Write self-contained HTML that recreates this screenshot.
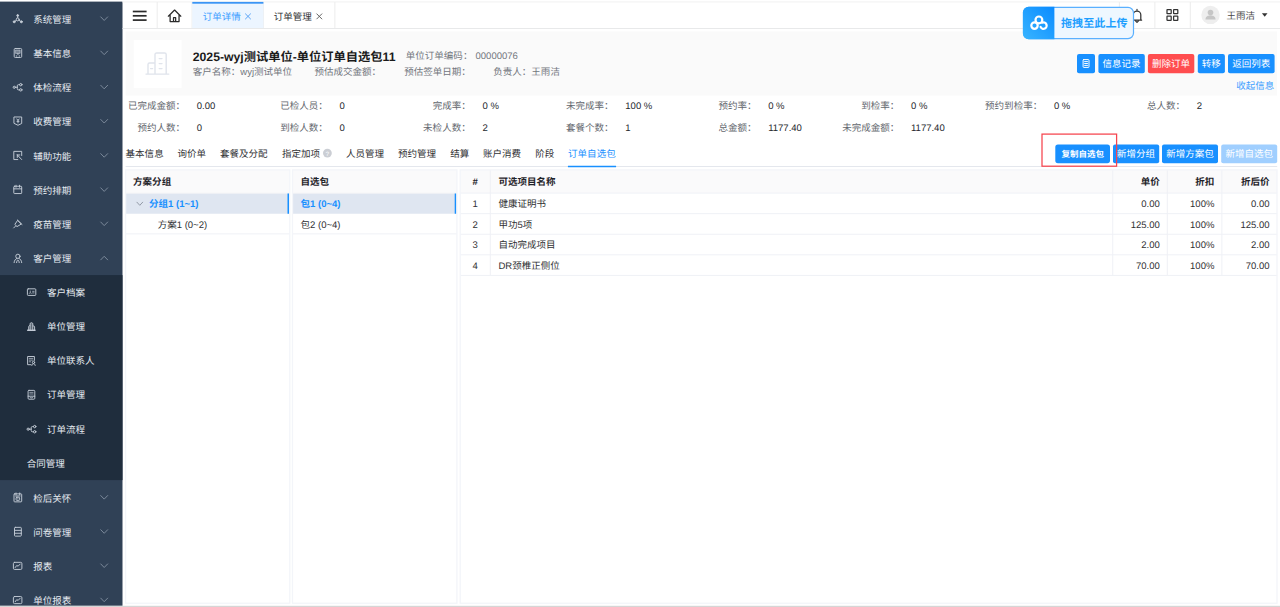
<!DOCTYPE html>
<html>
<head>
<meta charset="utf-8">
<title>订单详情</title>
<style>
*{box-sizing:border-box;margin:0;padding:0}
html,body{width:1280px;height:607px;overflow:hidden;background:#fff}
body{text-rendering:geometricPrecision;font-family:"Liberation Sans","Noto Sans CJK SC",sans-serif;font-size:9.53px;color:#303133;position:relative}
#bg{position:absolute;left:0;top:0;width:1280px;height:607px}
.t{position:absolute;white-space:nowrap;line-height:20px;height:20px}
.r{transform:translateX(-100%)}
.c{transform:translateX(-50%)}
.b{font-weight:bold}
.m{color:#e6ebf1}
.g{color:#72767d}
.lab{color:#63676e}
.val{color:#25282d}
.w{color:#fff}
</style>
</head>
<body>
<svg id="bg" width="1280" height="607" viewBox="0 0 1280 607" fill="none">
<rect x="0.00" y="1.60" width="122.50" height="604.20" fill="#304156"/>
<rect x="0.00" y="275.10" width="122.50" height="205.00" fill="#1f2d3d"/>
<g transform="translate(12.70 13.80) scale(1.000)" fill="none" stroke="#c3cbd6" stroke-width="0.95" stroke-linecap="round" stroke-linejoin="round"><circle cx="5" cy="1.700" r=".9" fill="#cfd6df"/><circle cx="5" cy="5.600" r="1.500"/><circle cx="1.500" cy="8" r="1" fill="#cfd6df"/><circle cx="8.600" cy="8" r="1" fill="#cfd6df"/><path d="M5 2.700V4.100M3.700 6.400L2.400 7.300M6.300 6.400l1.300.9"/></g>
<path d="M100.75 16.90l3.45 3.55 3.45-3.55" fill="none" stroke="#8391a2" stroke-width="0.9" stroke-linecap="round" stroke-linejoin="round"/>
<g transform="translate(12.70 47.99) scale(1.000)" fill="none" stroke="#c3cbd6" stroke-width="0.95" stroke-linecap="round" stroke-linejoin="round"><rect x="1.500" y=".5" width="7.500" height="9" rx="1.100"/><rect x="3.100" y="2.100" width="4.300" height="3.300" fill="#cfd6df" fill-opacity=".45" stroke-opacity=".7"/><path d="M5.250 5.500v1.100M3.500 8h.6M6.400 8h.6"/></g>
<path d="M100.75 51.09l3.45 3.55 3.45-3.55" fill="none" stroke="#8391a2" stroke-width="0.9" stroke-linecap="round" stroke-linejoin="round"/>
<g transform="translate(12.70 82.18) scale(1.000)" fill="none" stroke="#c3cbd6" stroke-width="0.95" stroke-linecap="round" stroke-linejoin="round"><circle cx="1.550" cy="5.100" r="1.100"/><circle cx="8.100" cy="2.500" r="1.200"/><circle cx="8.100" cy="7.700" r="1.200"/><path d="M2.700 5.100h1.900M6.800 2.500H5.700c-.7 0-1.100.4-1.100 1.100v3c0 .7.400 1.100 1.100 1.100h1.100"/></g>
<path d="M100.75 85.28l3.45 3.55 3.45-3.55" fill="none" stroke="#8391a2" stroke-width="0.9" stroke-linecap="round" stroke-linejoin="round"/>
<g transform="translate(12.70 116.37) scale(1.000)" fill="none" stroke="#c3cbd6" stroke-width="0.95" stroke-linecap="round" stroke-linejoin="round"><path d="M1.600.6h7.400v6.500L5.300 8.900 1.600 7.100z"/><path d="M4.200 2.600l1.100 1.600 1.100-1.600M5.300 4.200v2.300M4.300 5h2"/></g>
<path d="M100.75 119.47l3.45 3.55 3.45-3.55" fill="none" stroke="#8391a2" stroke-width="0.9" stroke-linecap="round" stroke-linejoin="round"/>
<g transform="translate(12.70 150.56) scale(1.000)" fill="none" stroke="#c3cbd6" stroke-width="0.95" stroke-linecap="round" stroke-linejoin="round"><path d="M9 5V.8H1.100v8.200h4"/><path d="M4.600 4.400l4.400 4.600M4.600 4.400h2.500M4.600 4.400v2.500"/></g>
<path d="M100.75 153.66l3.45 3.55 3.45-3.55" fill="none" stroke="#8391a2" stroke-width="0.9" stroke-linecap="round" stroke-linejoin="round"/>
<g transform="translate(12.70 184.75) scale(1.000)" fill="none" stroke="#c3cbd6" stroke-width="0.95" stroke-linecap="round" stroke-linejoin="round"><rect x="1.100" y="1.500" width="7.900" height="7.300" rx=".7"/><path d="M1.100 4.100h7.900M3.300.5v2M6.800.5v2"/></g>
<path d="M100.75 187.85l3.45 3.55 3.45-3.55" fill="none" stroke="#8391a2" stroke-width="0.9" stroke-linecap="round" stroke-linejoin="round"/>
<g transform="translate(12.70 218.94) scale(1.000)" fill="none" stroke="#c3cbd6" stroke-width="0.95" stroke-linecap="round" stroke-linejoin="round"><path d="M1 9l2-2M2.400 5.800l1.900 1.900 4.300-2.600L5.200 1.700zM4.700 1.100l4.600 4.400"/></g>
<path d="M100.75 222.04l3.45 3.55 3.45-3.55" fill="none" stroke="#8391a2" stroke-width="0.9" stroke-linecap="round" stroke-linejoin="round"/>
<g transform="translate(12.70 253.13) scale(1.000)" fill="none" stroke="#c3cbd6" stroke-width="0.95" stroke-linecap="round" stroke-linejoin="round"><circle cx="5.200" cy="3.200" r="2.150"/><path d="M1.400 9.500c.2-2.300 1.400-3.700 2.700-4.200M9 9.500c-.2-2.300-1.400-3.700-2.700-4.200M3.900 9.500c.1-1.400.6-2.300 1.300-2.700.7.400 1.200 1.300 1.300 2.700"/></g>
<path d="M100.75 259.83l3.45-3.55 3.45 3.55" fill="none" stroke="#8391a2" stroke-width="0.9" stroke-linecap="round" stroke-linejoin="round"/>
<g transform="translate(26.60 287.32) scale(1.000)" fill="none" stroke="#c3cbd6" stroke-width="0.95" stroke-linecap="round" stroke-linejoin="round"><rect x=".8" y="1.500" width="8.400" height="6.600" rx=".8"/><path d="M2.700 6c.3-1.200 1.600-1.200 1.900 0M3.650 3.700v.5M6 4h1.500M6 5.600h1.500" stroke-opacity=".8"/></g>
<g transform="translate(26.60 321.51) scale(1.000)" fill="none" stroke="#c3cbd6" stroke-width="0.95" stroke-linecap="round" stroke-linejoin="round"><path d="M2.100 8.400V5.100c0-.7.400-1 1.100-1M3.500 8.400V2.300c0-1.500 2.700-1.500 2.700 0v6.100M6.500 4.500h.6c.6 0 .9.400.9 1v2.900"/><path d="M1.100 8.700h7.300" stroke-width="1.500"/><path d="M3.600 8V2.400c0-1.300 2.500-1.300 2.500 0V8z" fill="#cfd6df" fill-opacity=".35" stroke="none"/></g>
<g transform="translate(26.60 355.70) scale(1.000)" fill="none" stroke="#c3cbd6" stroke-width="0.95" stroke-linecap="round" stroke-linejoin="round"><path d="M7.800 4.700V.8H1v8.200h3.300"/><path d="M2.600 2.700h3.600M2.600 4.400h3.600M2.600 6.100h1.400" stroke-opacity=".75"/><circle cx="6.900" cy="6.700" r="1.150"/><path d="M5.200 9.700c.2-1.200.9-1.700 1.700-1.700s1.500.5 1.700 1.700"/></g>
<g transform="translate(26.60 389.89) scale(1.000)" fill="none" stroke="#c3cbd6" stroke-width="0.95" stroke-linecap="round" stroke-linejoin="round"><rect x="1.500" y=".5" width="6.700" height="8.800" rx=".9"/><path d="M3.200 2.500h3.300M3.200 4.100h3.300" stroke-opacity=".7"/><path d="M1.500 6.300h6.700M3.400 7.500c.6.700 2.300.7 2.900 0"/></g>
<g transform="translate(26.60 424.08) scale(1.000)" fill="none" stroke="#c3cbd6" stroke-width="0.95" stroke-linecap="round" stroke-linejoin="round"><circle cx="1.550" cy="5.100" r="1.100"/><circle cx="8.100" cy="2.500" r="1.200"/><circle cx="8.100" cy="7.700" r="1.200"/><path d="M2.700 5.100h1.900M6.800 2.500H5.700c-.7 0-1.100.4-1.100 1.100v3c0 .7.400 1.100 1.100 1.100h1.100"/></g>
<g transform="translate(12.70 492.46) scale(1.000)" fill="none" stroke="#c3cbd6" stroke-width="0.95" stroke-linecap="round" stroke-linejoin="round"><rect x="1.300" y="1.400" width="7.700" height="8" rx=".7"/><path d="M3.300.5v1.800M7 .5v1.800M2.900 3.500h4.500"/><rect x="3.400" y="4.800" width="3.500" height="3.100" rx=".7"/><path d="M5.150 6.100v.5" stroke-width=".8"/></g>
<path d="M100.75 495.56l3.45 3.55 3.45-3.55" fill="none" stroke="#8391a2" stroke-width="0.9" stroke-linecap="round" stroke-linejoin="round"/>
<g transform="translate(12.70 526.65) scale(1.000)" fill="none" stroke="#c3cbd6" stroke-width="0.95" stroke-linecap="round" stroke-linejoin="round"><rect x="1.800" y=".7" width="6.800" height="8.800" rx=".8"/><path d="M1.800 3.700h6.800M1.800 6.600h6.800"/></g>
<path d="M100.75 529.75l3.45 3.55 3.45-3.55" fill="none" stroke="#8391a2" stroke-width="0.9" stroke-linecap="round" stroke-linejoin="round"/>
<g transform="translate(12.70 560.84) scale(1.000)" fill="none" stroke="#c3cbd6" stroke-width="0.95" stroke-linecap="round" stroke-linejoin="round"><rect x=".7" y="1.500" width="8.500" height="7.100" rx="1.200"/><path d="M2.500 6.700l1.500-2 1.500.6 2-2.100"/></g>
<path d="M100.75 563.94l3.45 3.55 3.45-3.55" fill="none" stroke="#8391a2" stroke-width="0.9" stroke-linecap="round" stroke-linejoin="round"/>
<g transform="translate(12.70 595.03) scale(1.000)" fill="none" stroke="#c3cbd6" stroke-width="0.95" stroke-linecap="round" stroke-linejoin="round"><rect x=".7" y="1.500" width="8.500" height="7.100" rx="1.200"/><path d="M2.500 6.700l1.500-2 1.500.6 2-2.100"/></g>
<path d="M100.75 598.13l3.45 3.55 3.45-3.55" fill="none" stroke="#8391a2" stroke-width="0.9" stroke-linecap="round" stroke-linejoin="round"/>
<path d="M122.50 1.90H1280.00" stroke="#f4f4f4" stroke-width="1.20"/>
<path d="M122.50 28.50H1280.00" stroke="#e8e9ea" stroke-width="1.10"/>
<path d="M157.20 2.00V28.00" stroke="#ececec" stroke-width="1.00"/>
<path d="M192.10 2.00V28.00" stroke="#ececec" stroke-width="1.00"/>
<path d="M263.40 2.00V28.00" stroke="#ececec" stroke-width="1.00"/>
<path d="M334.90 2.00V28.00" stroke="#ececec" stroke-width="1.00"/>
<path d="M1119.40 2.00V28.00" stroke="#ececec" stroke-width="1.00"/>
<path d="M1154.90 2.00V28.00" stroke="#ececec" stroke-width="1.00"/>
<path d="M1190.30 2.00V28.00" stroke="#ececec" stroke-width="1.00"/>
<path d="M132.80 11.50H146.60" stroke="#2a2a2a" stroke-width="1.70"/>
<path d="M132.80 15.80H146.60" stroke="#2a2a2a" stroke-width="1.70"/>
<path d="M132.80 20.10H146.60" stroke="#2a2a2a" stroke-width="1.70"/>
<g transform="translate(167.60 9.20) scale(0.970)" fill="none" stroke="#2a2a2a" stroke-width="1.30" stroke-linecap="round" stroke-linejoin="round"><path d="M.8 7.200L7.200.9l6.400 6.300M2.600 6.200v6.600h9.200V6.200M6.100 12.600V8.700h2.200v3.900"/></g>
<rect x="192.30" y="1.90" width="71.10" height="26.10" fill="#ecf5ff"/>
<rect x="192.30" y="1.90" width="71.10" height="1.80" fill="#3a94f5"/>
<path d="M245.2 13.600l5.600 5.600M250.800 13.600l-5.600 5.600" stroke="#4a9bf5" stroke-width=".9" fill="none"/>
<path d="M316.500 13.600l5.600 5.600M322.100 13.600l-5.600 5.600" stroke="#555" stroke-width=".9" fill="none"/>
<g transform="translate(1131.00 8.60) scale(1.000)" fill="none" stroke="#333" stroke-width="1.25" stroke-linecap="round" stroke-linejoin="round"><path d="M6 .8V1.800M2.200 11.400V6.200a3.800 3.800 0 0 1 7.600 0v5.200M1.400 11.600h9.200M4.700 12.500l1.300 1.300 1.300-1.300"/></g>
<g transform="translate(1166.20 8.70) scale(1.000)" fill="none" stroke="#333" stroke-width="1.25" stroke-linecap="round" stroke-linejoin="round"><rect x=".8" y=".8" width="4.200" height="4.200" rx=".4"/><rect x="7.400" y=".8" width="4.200" height="4.200" rx=".4"/><rect x=".8" y="7.400" width="4.200" height="4.200" rx=".4"/><rect x="7.400" y="7.400" width="4.200" height="4.200" rx=".4"/></g>
<circle cx="1210.5" cy="14.9" r="9.2" fill="#eeeeee"/><circle cx="1210.5" cy="12.600" r="2.800" fill="#c6c6c6"/><path d="M1205.400 19.400c.4-3.200 2.600-3.800 5.100-3.800s4.700.6 5.100 3.800z" fill="#c6c6c6"/>
<path d="M1261.900 13.300h5.600l-2.800 3.400z" fill="#333"/>
<rect x="125.60" y="31.40" width="1151.40" height="64.20" fill="#fafafa"/>
<rect x="133.70" y="40.00" width="47.90" height="47.90" fill="#fff"/>
<g transform="translate(145.60 52.00) scale(1.000)" fill="none" stroke="#e0e4ec" stroke-width="1.40" stroke-linecap="round" stroke-linejoin="round"><path d="M.4 22.100h22.800M9.400 22V2.600c0-1 .6-1.600 1.600-1.600h8c1 0 1.600.6 1.600 1.600V22M9.400 11H4c-1 0-1.600.6-1.600 1.600V22M13.600 6.600h2.800M13.600 11.600h2.800M13.600 16.600h2.800M5 16.600h2"/></g>
<rect x="1077.00" y="54.00" width="18.00" height="19.30" fill="#1890ff" rx="2.00"/>
<g transform="translate(1082.60 59.10) scale(1.000)" fill="none" stroke="#fff" stroke-width="1.00" stroke-linecap="round" stroke-linejoin="round"><rect x=".5" y=".5" width="5.900" height="7.800" rx=".6"/><path d="M2 2.500h2.900M2 4.400h2.900M2 6.300h2.900"/></g>
<rect x="1098.40" y="54.00" width="46.40" height="19.30" fill="#1890ff" rx="2.00"/>
<rect x="1147.90" y="54.00" width="46.40" height="19.30" fill="#ff4d4f" rx="2.00"/>
<rect x="1197.80" y="54.00" width="27.10" height="19.30" fill="#1890ff" rx="2.00"/>
<rect x="1228.00" y="54.00" width="46.60" height="19.30" fill="#1890ff" rx="2.00"/>
<defs><linearGradient id="ug" x1="0" y1="1" x2="1" y2="0"><stop offset="0" stop-color="#38b4ff"/><stop offset="1" stop-color="#0a8bff"/></linearGradient></defs>
<rect x="1023.50" y="7.40" width="110.00" height="31.20" fill="#eef7ff" stroke="#5ab0ff" stroke-width="1.20" rx="5.50"/>
<path d="M1028.400 6.800h26v32.400h-26a5.500 5.500 0 0 1-5.500-5.500V12.300a5.500 5.500 0 0 1 5.500-5.500z" fill="url(#ug)"/>
<g fill="none" stroke="#fff" stroke-width="2.200" stroke-linecap="round"><circle cx="1034.500" cy="25.600" r="3.200"/><path d="M1040.600 27a3.200 3.200 0 1 0 1.500-4.300"/><circle cx="1038.900" cy="19.900" r="3.400"/></g>
<path d="M125.60 166.50H1277.20" stroke="#e4e7ed" stroke-width="1.20"/>
<circle cx="327.4" cy="153.1" r="4.4" fill="#cbced4"/>
<path d="M567.90 166.50H616.10" stroke="#1890ff" stroke-width="1.50"/>
<rect x="1055.30" y="144.40" width="54.70" height="18.80" fill="#1890ff" rx="2.60"/>
<rect x="1113.00" y="144.60" width="46.20" height="18.70" fill="#1890ff" rx="2.00"/>
<rect x="1162.00" y="144.60" width="56.00" height="18.70" fill="#1890ff" rx="2.00"/>
<rect x="1221.20" y="144.60" width="56.00" height="18.70" fill="#a0cfff" rx="2.00"/>
<rect x="1042.00" y="134.10" width="74.60" height="32.10" fill="none" stroke="#f5434d" stroke-width="1.25"/>
<rect x="125.60" y="169.70" width="164.20" height="433.50" fill="#fff"/>
<rect x="125.60" y="169.70" width="164.20" height="23.60" fill="#fafafb"/>
<rect x="125.60" y="193.40" width="164.20" height="20.35" fill="#dfe6f1"/>
<path d="M125.60 193.30H289.80" stroke="#eff1f6" stroke-width="1.00"/>
<path d="M125.60 233.90H289.80" stroke="#eff1f6" stroke-width="1.00"/>
<rect x="287.50" y="193.50" width="1.60" height="20.25" fill="#1890ff"/>
<rect x="125.60" y="169.90" width="164.20" height="433.30" fill="none" stroke="#f3f5f9" stroke-width="1.30"/>
<path d="M136.9 202.2l2.9 3.1 2.9-3.1" fill="none" stroke="#8a929e" stroke-width=".9" stroke-linecap="round" stroke-linejoin="round"/>
<rect x="292.50" y="169.70" width="164.40" height="433.50" fill="#fff"/>
<rect x="292.50" y="169.70" width="164.40" height="23.60" fill="#fafafb"/>
<rect x="292.50" y="193.40" width="164.40" height="20.35" fill="#dfe6f1"/>
<path d="M292.50 193.30H456.90" stroke="#eff1f6" stroke-width="1.00"/>
<path d="M292.50 233.90H456.90" stroke="#eff1f6" stroke-width="1.00"/>
<rect x="454.70" y="193.50" width="1.60" height="20.25" fill="#1890ff"/>
<rect x="292.50" y="169.90" width="164.40" height="433.30" fill="none" stroke="#f3f5f9" stroke-width="1.30"/>
<rect x="460.20" y="169.70" width="817.00" height="433.50" fill="#fff"/>
<rect x="460.20" y="169.70" width="817.00" height="23.60" fill="#fafafb"/>
<path d="M460.20 193.10H1277.20" stroke="#eff1f6" stroke-width="1.00"/>
<path d="M460.20 213.68H1277.20" stroke="#eff1f6" stroke-width="1.00"/>
<path d="M460.20 234.26H1277.20" stroke="#eff1f6" stroke-width="1.00"/>
<path d="M460.20 254.84H1277.20" stroke="#eff1f6" stroke-width="1.00"/>
<path d="M460.20 275.42H1277.20" stroke="#eff1f6" stroke-width="1.00"/>
<path d="M490.30 169.90V275.42" stroke="#eff1f6" stroke-width="1.00"/>
<path d="M1112.75 169.90V275.42" stroke="#eff1f6" stroke-width="1.00"/>
<path d="M1167.30 169.90V275.42" stroke="#eff1f6" stroke-width="1.00"/>
<path d="M1221.90 169.90V275.42" stroke="#eff1f6" stroke-width="1.00"/>
<rect x="460.20" y="169.90" width="816.80" height="433.30" fill="none" stroke="#f3f5f9" stroke-width="1.30"/>
<rect x="0.00" y="605.80" width="1280.00" height="1.20" fill="#d6d6d6"/>
</svg>
<nav>
<div class="t m" style="left:33.3px;top:11px">系统管理</div>
<div class="t m" style="left:33.3px;top:45px">基本信息</div>
<div class="t m" style="left:33.3px;top:79px">体检流程</div>
<div class="t m" style="left:33.3px;top:113px">收费管理</div>
<div class="t m" style="left:33.3px;top:148px">辅助功能</div>
<div class="t m" style="left:33.3px;top:182px">预约排期</div>
<div class="t m" style="left:33.3px;top:216px">疫苗管理</div>
<div class="t m" style="left:33.3px;top:250px">客户管理</div>
<div class="t m" style="left:47.0px;top:284px">客户档案</div>
<div class="t m" style="left:47.0px;top:318px">单位管理</div>
<div class="t m" style="left:47.0px;top:352px">单位联系人</div>
<div class="t m" style="left:47.0px;top:386px">订单管理</div>
<div class="t m" style="left:47.0px;top:421px">订单流程</div>
<div class="t m" style="left:26.7px;top:455px">合同管理</div>
<div class="t m" style="left:33.3px;top:490px">检后关怀</div>
<div class="t m" style="left:33.3px;top:524px">问卷管理</div>
<div class="t m" style="left:33.3px;top:558px">报表</div>
<div class="t m" style="left:33.3px;top:592px">单位报表</div>
</nav>
<header>
<div class="t" style="left:202.7px;top:8px;color:#409eff">订单详情</div>
<div class="t" style="left:273.8px;top:8px;color:#303133">订单管理</div>
<div class="t" style="left:1226.4px;top:7px;color:#4a4a4a">王雨洁</div>
</header>
<main>
<div class="t b" style="left:192.7px;top:47px;font-size:12.25px;color:#1a1a1a">2025-wyj测试单位-单位订单自选包11</div>
<div class="t g" style="left:405.8px;top:47px">单位订单编码：</div>
<div class="t g" style="left:475.5px;top:47px">00000076</div>
<div class="t g" style="left:192.7px;top:63px">客户名称：wyj测试单位</div>
<div class="t g" style="left:314.5px;top:63px">预估成交金额：</div>
<div class="t g" style="left:404.2px;top:63px">预估签单日期：</div>
<div class="t g" style="left:493.3px;top:63px">负责人：王雨洁</div>
<div class="t c w" style="left:1121.6px;top:55px">信息记录</div>
<div class="t c w" style="left:1171.1px;top:55px">删除订单</div>
<div class="t c w" style="left:1211.3px;top:55px">转移</div>
<div class="t c w" style="left:1251.3px;top:55px">返回列表</div>
<div class="t r" style="left:1274.2px;top:77px;color:#409eff">收起信息</div>
<div class="t b" style="left:1061.0px;top:14px;font-size:11.1px;color:#1e9fff">拖拽至此上传</div>
<div class="t r lab" style="left:185.0px;top:97px">已完成金额：</div>
<div class="t val" style="left:196.8px;top:97px">0.00</div>
<div class="t r lab" style="left:327.9px;top:97px">已检人员：</div>
<div class="t val" style="left:339.6px;top:97px">0</div>
<div class="t r lab" style="left:470.7px;top:97px">完成率：</div>
<div class="t val" style="left:482.5px;top:97px">0 %</div>
<div class="t r lab" style="left:613.6px;top:97px">未完成率：</div>
<div class="t val" style="left:625.3px;top:97px">100 %</div>
<div class="t r lab" style="left:756.5px;top:97px">预约率：</div>
<div class="t val" style="left:768.2px;top:97px">0 %</div>
<div class="t r lab" style="left:899.4px;top:97px">到检率：</div>
<div class="t val" style="left:911.0px;top:97px">0 %</div>
<div class="t r lab" style="left:1042.2px;top:97px">预约到检率：</div>
<div class="t val" style="left:1053.9px;top:97px">0 %</div>
<div class="t r lab" style="left:1185.1px;top:97px">总人数：</div>
<div class="t val" style="left:1196.8px;top:97px">2</div>
<div class="t r lab" style="left:185.0px;top:119px">预约人数：</div>
<div class="t val" style="left:196.8px;top:119px">0</div>
<div class="t r lab" style="left:327.9px;top:119px">到检人数：</div>
<div class="t val" style="left:339.6px;top:119px">0</div>
<div class="t r lab" style="left:470.7px;top:119px">未检人数：</div>
<div class="t val" style="left:482.5px;top:119px">2</div>
<div class="t r lab" style="left:613.6px;top:119px">套餐个数：</div>
<div class="t val" style="left:625.3px;top:119px">1</div>
<div class="t r lab" style="left:756.5px;top:119px">总金额：</div>
<div class="t val" style="left:768.2px;top:119px">1177.40</div>
<div class="t r lab" style="left:899.4px;top:119px">未完成金额：</div>
<div class="t val" style="left:911.0px;top:119px">1177.40</div>
<div class="t" style="left:125.6px;top:145px;color:#303133">基本信息</div>
<div class="t" style="left:177.5px;top:145px;color:#303133">询价单</div>
<div class="t" style="left:220.0px;top:145px;color:#303133">套餐及分配</div>
<div class="t" style="left:282.0px;top:145px;color:#303133">指定加项</div>
<div class="t" style="left:346.0px;top:145px;color:#303133">人员管理</div>
<div class="t" style="left:398.0px;top:145px;color:#303133">预约管理</div>
<div class="t" style="left:450.2px;top:145px;color:#303133">结算</div>
<div class="t" style="left:483.0px;top:145px;color:#303133">账户消费</div>
<div class="t" style="left:535.3px;top:145px;color:#303133">阶段</div>
<div class="t c b" style="left:327.4px;top:145px;font-size:6.4px;color:#f1f2f4">?</div>
<div class="t" style="left:568.1px;top:145px;color:#1890ff">订单自选包</div>
<div class="t c w b" style="left:1082.7px;top:144px;font-size:8.5px">复制自选包</div>
<div class="t c w" style="left:1136.1px;top:145px">新增分组</div>
<div class="t c w" style="left:1190.0px;top:145px">新增方案包</div>
<div class="t c w" style="left:1249.2px;top:145px">新增自选包</div>
<div class="t b" style="left:133.1px;top:173px;color:#1f2329">方案分组</div>
<div class="t b" style="left:149.0px;top:195px;color:#1890ff">分组1 (1~1)</div>
<div class="t" style="left:157.7px;top:216px;color:#303133">方案1 (0~2)</div>
<div class="t b" style="left:300.6px;top:173px;color:#1f2329">自选包</div>
<div class="t b" style="left:300.6px;top:195px;color:#1890ff">包1 (0~4)</div>
<div class="t" style="left:300.6px;top:216px;color:#303133">包2 (0~4)</div>
<div class="t c b" style="left:475.2px;top:173px;color:#1f2329">#</div>
<div class="t b" style="left:498.5px;top:173px;color:#1f2329">可选项目名称</div>
<div class="t r b" style="left:1159.8px;top:173px;color:#1f2329">单价</div>
<div class="t r b" style="left:1214.4px;top:173px;color:#1f2329">折扣</div>
<div class="t r b" style="left:1269.6px;top:173px;color:#1f2329">折后价</div>
<div class="t c" style="left:475.2px;top:195px">1</div>
<div class="t" style="left:498.5px;top:195px">健康证明书</div>
<div class="t r" style="left:1159.8px;top:195px">0.00</div>
<div class="t r" style="left:1214.4px;top:195px">100%</div>
<div class="t r" style="left:1269.6px;top:195px">0.00</div>
<div class="t c" style="left:475.2px;top:216px">2</div>
<div class="t" style="left:498.5px;top:216px">甲功5项</div>
<div class="t r" style="left:1159.8px;top:216px">125.00</div>
<div class="t r" style="left:1214.4px;top:216px">100%</div>
<div class="t r" style="left:1269.6px;top:216px">125.00</div>
<div class="t c" style="left:475.2px;top:236px">3</div>
<div class="t" style="left:498.5px;top:236px">自动完成项目</div>
<div class="t r" style="left:1159.8px;top:236px">2.00</div>
<div class="t r" style="left:1214.4px;top:236px">100%</div>
<div class="t r" style="left:1269.6px;top:236px">2.00</div>
<div class="t c" style="left:475.2px;top:257px">4</div>
<div class="t" style="left:498.5px;top:257px">DR颈椎正侧位</div>
<div class="t r" style="left:1159.8px;top:257px">70.00</div>
<div class="t r" style="left:1214.4px;top:257px">100%</div>
<div class="t r" style="left:1269.6px;top:257px">70.00</div>
</main>
</body>
</html>
